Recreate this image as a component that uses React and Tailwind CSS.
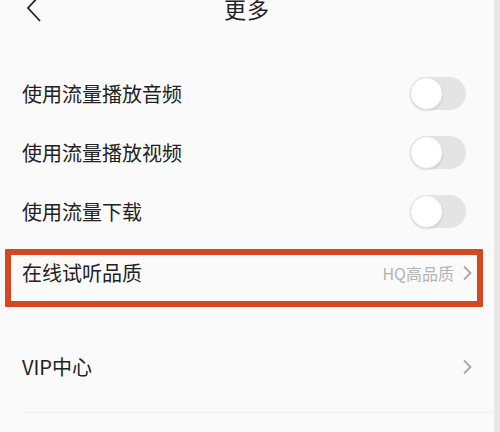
import React from 'react';

const font = { fontFamily: '"Noto Sans CJK SC", "Noto Sans", sans-serif' };

const Toggle = () => (
  <div className="w-[56px] h-[33px] rounded-full bg-[#e4e4e4] flex items-center">
    <div className="w-[33px] h-[33px] rounded-full bg-white border border-[#e0e0e0] shadow-[0_1px_2px_rgba(0,0,0,0.12)]" />
  </div>
);

const Chevron = () => (
  <svg width="10" height="16" viewBox="0 0 10 16" className="ml-[8px]">
    <polyline points="2,1.5 8.5,8 2,14.5" fill="none" stroke="#a8a8a8" strokeWidth="1.8" strokeLinejoin="miter" />
  </svg>
);

const SwitchRow = ({ label }) => (
  <div className="h-[59px] flex items-center justify-between pl-[22px] pr-[28px]">
    <span className="text-[20px] text-[#222]">{label}</span>
    <Toggle />
  </div>
);

export default function App() {
  return (
    <div className="w-[500px] h-[432px] overflow-hidden bg-[#fafafa] flex" style={font}>
      <div className="w-[494px] flex flex-col">
        {/* Header */}
        <div className="h-[56px] -mt-[20px] relative flex items-center justify-center shrink-0">
          <svg width="16" height="28" viewBox="0 0 16 28" className="absolute left-[26px] top-[14px]">
            <polyline points="14,1 2,14 14,27" fill="none" stroke="#222" strokeWidth="1.8" />
          </svg>
          <span className="text-[22px] text-[#222] tracking-[1px]">更多</span>
        </div>

        <div className="h-[28px] shrink-0" />

        <SwitchRow label="使用流量播放音频" />
        <SwitchRow label="使用流量播放视频" />
        <SwitchRow label="使用流量下载" />

        <div className="h-[2px] shrink-0" />

        <div className="relative h-[59px] flex items-center justify-between pl-[22px] pr-[22px]">
          <span className="absolute left-[5px] right-[11px] top-[6px] h-[58px] border-[6px] border-[#d4471f] rounded-[1px]" />
          <span className="text-[20px] text-[#222]">在线试听品质</span>
          <div className="flex items-center">
            <span className="text-[16px] text-[#b3b3b3]">HQ高品质</span>
            <Chevron />
          </div>
        </div>

        <div className="h-[35px] shrink-0" />

        <div className="h-[60px] flex items-center justify-between pl-[22px] pr-[22px]">
          <span className="text-[20px] text-[#222]">VIP中心</span>
          <Chevron />
        </div>

        <div className="h-[15px] shrink-0" />
        <div className="ml-[22px] h-px bg-[#f0f0f0]" />
      </div>
      <div className="w-[6px] bg-[#e8e8e8]" />
    </div>
  );
}
